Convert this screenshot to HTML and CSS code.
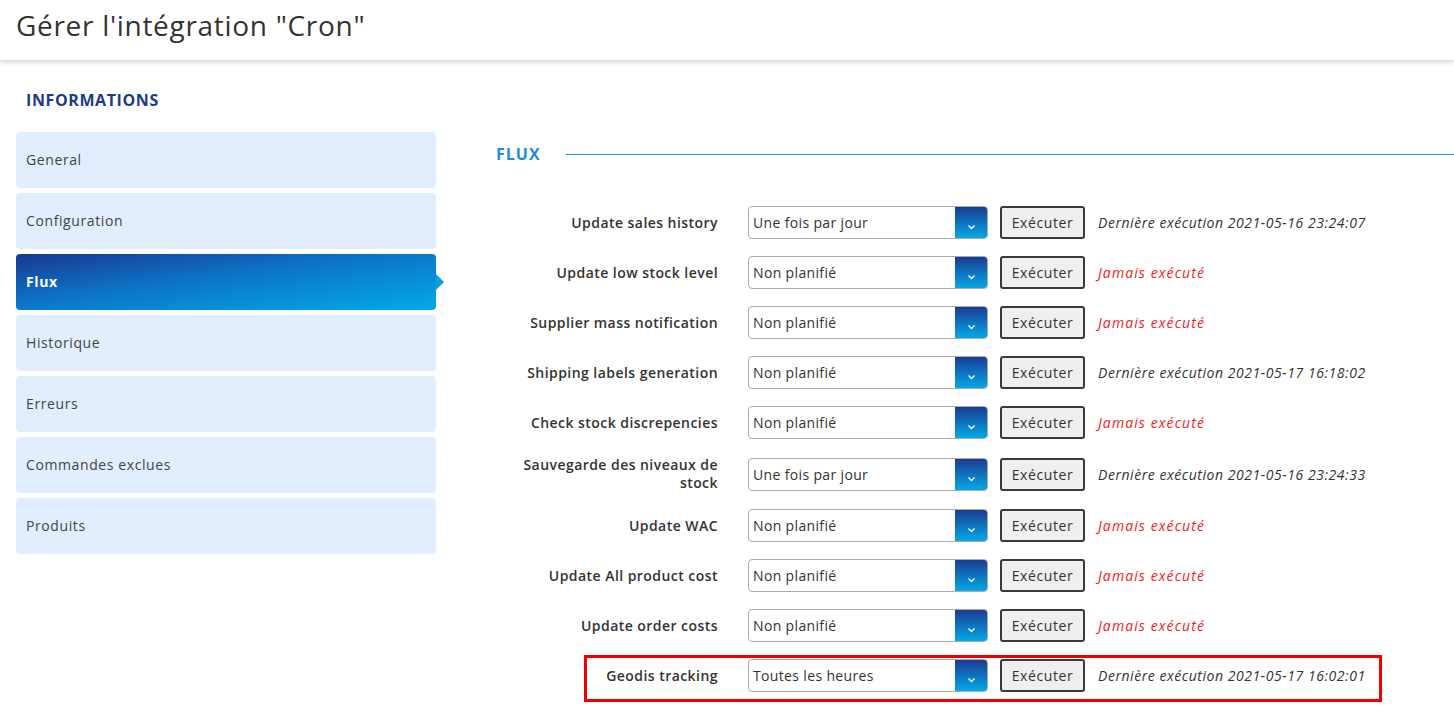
FILE: index.html
```html
<!DOCTYPE html>
<html lang="fr">
<head>
<meta charset="utf-8">
<title>Cron</title>
<link rel="stylesheet" href="styles.css">
</head>
<body>
<header class="topbar">
  <h1 class="title">Gérer l'intégration "Cron"</h1>
</header>
<div class="layout">
  <aside class="sidebar">
    <h2 class="side-title">INFORMATIONS</h2>
    <nav class="menu">
      <a class="menu-item">General</a>
      <a class="menu-item">Configuration</a>
      <a class="menu-item active">Flux</a>
      <a class="menu-item">Historique</a>
      <a class="menu-item">Erreurs</a>
      <a class="menu-item">Commandes exclues</a>
      <a class="menu-item">Produits</a>
    </nav>
  </aside>
  <main class="content">
    <div class="section-head">
      <h3 class="section-title">FLUX</h3>
      <div class="section-line"></div>
    </div>
    <div class="rows">
      <div class="row">
        <div class="label">Update sales history</div>
        <div class="select"><span class="sel-text">Une fois par jour</span><span class="sel-btn"><svg width="9" height="6" viewBox="0 0 9 6"><path d="M1.5 1.5 L4.5 4.5 L7.5 1.5" fill="none" stroke="#fff" stroke-width="1.3"/></svg></span></div>
        <button class="exec">Exécuter</button>
        <div class="status">Dernière exécution 2021-05-16 23:24:07</div>
      </div>
      <div class="row">
        <div class="label">Update low stock level</div>
        <div class="select"><span class="sel-text">Non planifié</span><span class="sel-btn"><svg width="9" height="6" viewBox="0 0 9 6"><path d="M1.5 1.5 L4.5 4.5 L7.5 1.5" fill="none" stroke="#fff" stroke-width="1.3"/></svg></span></div>
        <button class="exec">Exécuter</button>
        <div class="status never">Jamais exécuté</div>
      </div>
      <div class="row">
        <div class="label">Supplier mass notification</div>
        <div class="select"><span class="sel-text">Non planifié</span><span class="sel-btn"><svg width="9" height="6" viewBox="0 0 9 6"><path d="M1.5 1.5 L4.5 4.5 L7.5 1.5" fill="none" stroke="#fff" stroke-width="1.3"/></svg></span></div>
        <button class="exec">Exécuter</button>
        <div class="status never">Jamais exécuté</div>
      </div>
      <div class="row">
        <div class="label">Shipping labels generation</div>
        <div class="select"><span class="sel-text">Non planifié</span><span class="sel-btn"><svg width="9" height="6" viewBox="0 0 9 6"><path d="M1.5 1.5 L4.5 4.5 L7.5 1.5" fill="none" stroke="#fff" stroke-width="1.3"/></svg></span></div>
        <button class="exec">Exécuter</button>
        <div class="status">Dernière exécution 2021-05-17 16:18:02</div>
      </div>
      <div class="row">
        <div class="label">Check stock discrepencies</div>
        <div class="select"><span class="sel-text">Non planifié</span><span class="sel-btn"><svg width="9" height="6" viewBox="0 0 9 6"><path d="M1.5 1.5 L4.5 4.5 L7.5 1.5" fill="none" stroke="#fff" stroke-width="1.3"/></svg></span></div>
        <button class="exec">Exécuter</button>
        <div class="status never">Jamais exécuté</div>
      </div>
      <div class="row">
        <div class="label">Sauvegarde des niveaux de stock</div>
        <div class="select"><span class="sel-text">Une fois par jour</span><span class="sel-btn"><svg width="9" height="6" viewBox="0 0 9 6"><path d="M1.5 1.5 L4.5 4.5 L7.5 1.5" fill="none" stroke="#fff" stroke-width="1.3"/></svg></span></div>
        <button class="exec">Exécuter</button>
        <div class="status">Dernière exécution 2021-05-16 23:24:33</div>
      </div>
      <div class="row">
        <div class="label">Update WAC</div>
        <div class="select"><span class="sel-text">Non planifié</span><span class="sel-btn"><svg width="9" height="6" viewBox="0 0 9 6"><path d="M1.5 1.5 L4.5 4.5 L7.5 1.5" fill="none" stroke="#fff" stroke-width="1.3"/></svg></span></div>
        <button class="exec">Exécuter</button>
        <div class="status never">Jamais exécuté</div>
      </div>
      <div class="row">
        <div class="label">Update All product cost</div>
        <div class="select"><span class="sel-text">Non planifié</span><span class="sel-btn"><svg width="9" height="6" viewBox="0 0 9 6"><path d="M1.5 1.5 L4.5 4.5 L7.5 1.5" fill="none" stroke="#fff" stroke-width="1.3"/></svg></span></div>
        <button class="exec">Exécuter</button>
        <div class="status never">Jamais exécuté</div>
      </div>
      <div class="row">
        <div class="label">Update order costs</div>
        <div class="select"><span class="sel-text">Non planifié</span><span class="sel-btn"><svg width="9" height="6" viewBox="0 0 9 6"><path d="M1.5 1.5 L4.5 4.5 L7.5 1.5" fill="none" stroke="#fff" stroke-width="1.3"/></svg></span></div>
        <button class="exec">Exécuter</button>
        <div class="status never">Jamais exécuté</div>
      </div>
      <div class="row highlighted">
        <div class="label">Geodis tracking</div>
        <div class="select"><span class="sel-text">Toutes les heures</span><span class="sel-btn"><svg width="9" height="6" viewBox="0 0 9 6"><path d="M1.5 1.5 L4.5 4.5 L7.5 1.5" fill="none" stroke="#fff" stroke-width="1.3"/></svg></span></div>
        <button class="exec">Exécuter</button>
        <div class="status">Dernière exécution 2021-05-17 16:02:01</div>
      </div>
    </div>
  </main>
</div>
</body>
</html>
```
FILE: styles.css
```css
*, *::before, *::after { box-sizing: border-box; }
html, body { margin: 0; padding: 0; background: #fff; }
body {
  font-family: "Open Sans", "DejaVu Sans", sans-serif;
  font-size: 14px;
  color: #333;
  padding-bottom: 20px;
}
.topbar {
  height: 60px;
  background: #fff;
  box-shadow: 0 2px 5px rgba(0, 0, 0, 0.18);
  padding-left: 16px;
  position: relative;
  z-index: 1;
}
.title {
  margin: 0;
  font-size: 28px;
  font-weight: 400;
  line-height: 50px;
  color: #333;
  letter-spacing: 0.7px;
}
.layout {
  display: flex;
  padding-left: 16px;
}
.sidebar {
  width: 420px;
  flex: none;
}
.side-title {
  margin: 28px 0 20px 10px;
  font-size: 16px;
  line-height: 24px;
  font-weight: 700;
  color: #1c3a8f;
  letter-spacing: 0.6px;
}
.menu {
  display: flex;
  flex-direction: column;
  gap: 5px;
}
.menu-item {
  display: flex;
  align-items: center;
  height: 56px;
  padding-left: 10px;
  padding-bottom: 1px;
  background: #e2eefe;
  border-radius: 4px;
  color: #444;
  font-size: 14px;
  letter-spacing: 0.6px;
  position: relative;
}
.menu-item.active {
  background: linear-gradient(to right bottom, #1a3890 0%, #0c75c8 45%, #03a9e8 100%);
  color: #fff;
  font-weight: 700;
}
.menu-item.active::after {
  content: "";
  position: absolute;
  right: -8px;
  top: 50%;
  margin-top: -8px;
  border-left: 8px solid #04a2e3;
  border-top: 8px solid transparent;
  border-bottom: 8px solid transparent;
}
.content {
  flex: 1;
  margin-left: 60px;
}
.section-head {
  display: flex;
  align-items: center;
  margin-top: 82px;
  height: 24px;
}
.section-title {
  margin: 0;
  font-size: 16px;
  font-weight: 700;
  color: #1b8fd7;
  width: 70px;
  letter-spacing: 1px;
}
.section-line {
  flex: 1;
  height: 1px;
  background: #1a95d8;
}
.rows {
  margin-top: 40px;
  display: flex;
  flex-direction: column;
  gap: 17px;
}
.row {
  display: flex;
  align-items: center;
  min-height: 33px;
  position: relative;
}
.label {
  width: 200px;
  margin-left: 22px;
  text-align: right;
  font-weight: 600;
  color: #333;
  line-height: 18px;
  letter-spacing: 0.45px;
}
.select {
  margin-left: 30px;
  width: 240px;
  height: 33px;
  border: 1px solid #aaa;
  border-radius: 4px;
  display: flex;
  align-items: center;
  overflow: hidden;
}
.sel-text {
  flex: 1;
  padding-left: 4px;
  color: #333;
  letter-spacing: 0.35px;
}
.sel-btn {
  width: 32px;
  height: 100%;
  background: linear-gradient(to bottom, #1b3b92, #03a9e8);
  display: flex;
  align-items: flex-end;
  justify-content: center;
  padding-bottom: 8px;
}
.sel-btn svg { display: block; }
.exec {
  margin-left: 12px;
  width: 85px;
  height: 33px;
  background: #efefef;
  border: 2px solid #3a3a3a;
  border-radius: 3px;
  font-family: inherit;
  font-size: 14px;
  color: #333;
  padding: 0;
  letter-spacing: 0.6px;
}
.status {
  margin-left: 13px;
  font-style: italic;
  color: #333;
  letter-spacing: 0.55px;
}
.status.never { color: #f01c1c; letter-spacing: 1.1px; }
.highlighted::after {
  content: "";
  position: absolute;
  left: 88px;
  top: -4px;
  width: 798px;
  height: 47px;
  border: 3px solid #f00000;
  pointer-events: none;
}
```
